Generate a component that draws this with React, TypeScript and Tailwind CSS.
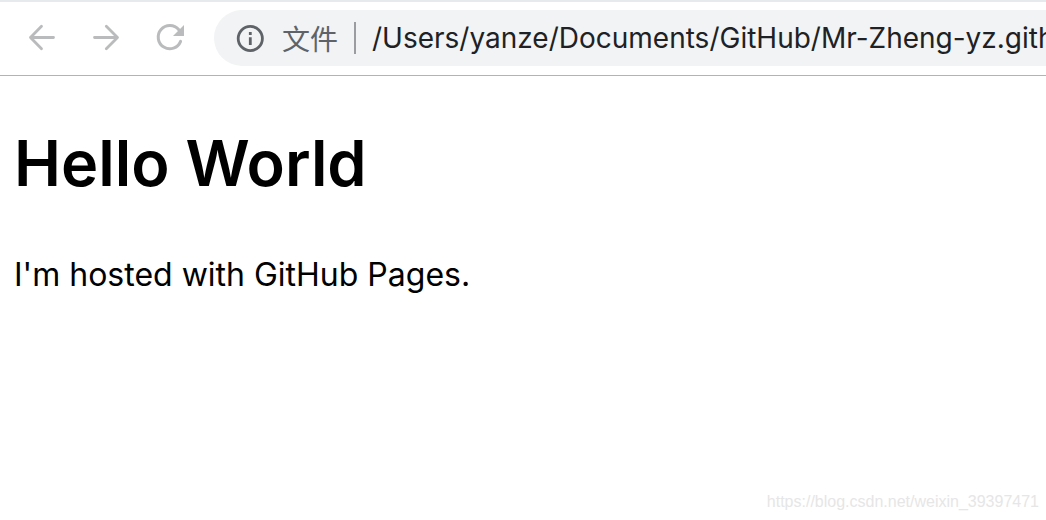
import React from "react";

function NavButton({ label, children }: { label: string; children: React.ReactNode }) {
  return (
    <button
      type="button"
      aria-label={label}
      disabled
      className="flex size-8 shrink-0 items-center justify-center text-[#babbbc]"
    >
      {children}
    </button>
  );
}

function BackIcon() {
  return (
    <svg viewBox="0 0 32 32" className="size-8" fill="none" stroke="currentColor" strokeWidth="2.8" strokeLinecap="round" strokeLinejoin="round">
      <path d="M27.5 15.5H4.5M15.5 4.2 4.5 15.5 15.5 26.8" />
    </svg>
  );
}

function ForwardIcon() {
  return (
    <svg viewBox="0 0 32 32" className="size-8" fill="none" stroke="currentColor" strokeWidth="2.8" strokeLinecap="round" strokeLinejoin="round">
      <path d="M4.5 15.5h22.8M16.3 4.2 27.5 15.5 16.3 26.8" />
    </svg>
  );
}

function ReloadIcon() {
  return (
    <svg viewBox="0 0 32 32" className="size-8" fill="none">
      <path d="M24.8 7.8A11.6 11.6 0 1 0 26.6 19.4" stroke="currentColor" strokeWidth="3" strokeLinecap="round" />
      <path d="M30 3v11H19z" fill="currentColor" />
    </svg>
  );
}

function InfoIcon() {
  return (
    <svg viewBox="0 0 28 28" className="size-7" fill="none" aria-hidden="true">
      <circle cx="14.3" cy="14.5" r="12.1" stroke="#5f6368" strokeWidth="2.8" />
      <path d="M12.9 8.1h2.8v2.8h-2.8zM12.9 13.3h2.8v7.6h-2.8z" fill="#5f6368" />
    </svg>
  );
}

function Toolbar() {
  return (
    <header className="flex items-center border-t-2 border-b border-t-[#e7eaed] border-b-[#b3b3b5] bg-white pt-2 pb-[9px] pl-[26px]">
      <nav aria-label="History" className="mr-7 flex items-center gap-8">
        <NavButton label="Back">
          <BackIcon />
        </NavButton>
        <NavButton label="Forward">
          <ForwardIcon />
        </NavButton>
        <NavButton label="Reload">
          <ReloadIcon />
        </NavButton>
      </nav>
      <div className="flex h-14 min-w-0 flex-1 items-center rounded-l-full bg-[#f1f3f4] pl-[22px] text-[28px]">
        <InfoIcon />
        <label
          htmlFor="address"
          className="ml-[18px] shrink-0 font-['Noto_Sans_CJK_SC',sans-serif] leading-10 text-[#5f6368]"
        >
          文件
        </label>
        <span className="mx-4 h-8 w-0.5 shrink-0 bg-[#9a9ca0]" />
        <input
          id="address"
          type="text"
          defaultValue="/Users/yanze/Documents/GitHub/Mr-Zheng-yz.github"
          spellCheck={false}
          className="min-w-0 flex-1 bg-transparent font-[Inter,sans-serif] leading-10 text-[#202124] outline-none"
        />
      </div>
    </header>
  );
}

export default function App() {
  return (
    <div className="flex min-h-screen flex-col bg-white">
      <Toolbar />
      <main className="flex-1 px-3.5 pt-[43px] font-[Inter,sans-serif] text-black">
        <h1 className="text-[63px] leading-[88px] font-semibold">Hello World</h1>
        <p className="mt-[46px] text-[32px] leading-[44px]">I'm hosted with GitHub Pages.</p>
      </main>
      <footer className="px-[7px] pb-2 text-right font-['Liberation_Sans',sans-serif] text-base leading-5 text-[#e6e6e6]">
        https://blog.csdn.net/weixin_39397471
      </footer>
    </div>
  );
}
